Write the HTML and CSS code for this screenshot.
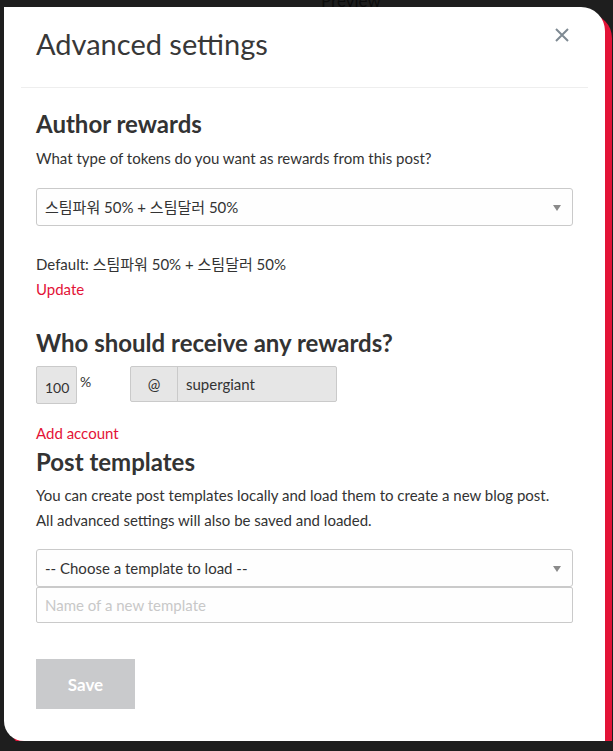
FILE: index.html
```html
<!DOCTYPE html>
<html lang="ko">
<head>
  <meta charset="UTF-8" />
  <meta name="viewport" content="width=device-width, initial-scale=1.0"/>
  <title>Advanced settings</title>
  <link rel="stylesheet" href="styles.css">
</head>
<body>
  <!-- Seite hinter dem Overlay -->
  <div class="page-behind">Preview</div>

  <div class="modal">
    <div class="modal-header">
      <h2 class="modal-title">Advanced settings</h2>
      <button class="close-button" aria-label="Close">
        <svg width="14" height="14" viewBox="0 0 14 14">
          <path d="M1 1 L13 13 M13 1 L1 13" stroke="#7f8a93" stroke-width="2" fill="none"/>
        </svg>
      </button>
    </div>

    <div class="modal-body">
      <!-- Author rewards -->
      <h3 class="section-title">Author rewards</h3>
      <p class="hint">What type of tokens do you want as rewards from this post?</p>
      <div class="select-wrap">
        <select class="select">
          <option>스팀파워 50% + 스팀달러 50%</option>
        </select>
        <span class="caret"></span>
      </div>
      <p class="default-note">
        Default: 스팀파워 50% + 스팀달러 50%<br>
        <a href="#" class="link">Update</a>
      </p>

      <!-- Beneficiaries -->
      <h3 class="section-title section-title--beneficiaries">Who should receive any rewards?</h3>
      <div class="beneficiary-row">
        <input class="percent-input" type="text" value="100" disabled>
        <span class="percent-sign">%</span>
        <div class="account-group">
          <span class="account-prefix">@</span>
          <input class="account-input" type="text" value="supergiant" disabled>
        </div>
      </div>
      <a href="#" class="link add-account">Add account</a>

      <!-- Templates -->
      <h3 class="section-title section-title--templates">Post templates</h3>
      <p class="hint hint--templates">
        You can create post templates locally and load them to create a new blog post.<br>
        All advanced settings will also be saved and loaded.
      </p>
      <div class="select-wrap select-wrap--templates">
        <select class="select">
          <option>-- Choose a template to load --</option>
        </select>
        <span class="caret"></span>
      </div>
      <input class="text-input" type="text" placeholder="Name of a new template">

      <button class="save-button" disabled>Save</button>
    </div>
  </div>
</body>
</html>
```

FILE: styles.css
```css
:root {
  --overlay: #1e1e1e;
  --accent: #e31337;
  --text: #333333;
  --border: #cacaca;
  --disabled-bg: #e6e6e6;
}

html, body {
  margin: 0;
  padding: 0;
}
body {
  background-color: var(--overlay);
  font-family: Lato, "Noto Sans CJK KR", sans-serif;
  color: var(--text);
  position: relative;
}

/* Text der darunterliegenden Seite, schaut oben heraus */
.page-behind {
  position: absolute;
  top: -9px;
  left: 321px;
  font-size: 17px;
  line-height: 20px;
  color: #0c0c0c;
}

/* Modal-Fenster mit rotem Versatz-Schatten */
.modal {
  margin: 7px 0 0 4px;
  width: 601px;
  height: 734px;
  box-sizing: border-box;
  padding: 0 17px;
  background-color: #ffffff;
  border-radius: 0 24px 0 20px;
  box-shadow: 7px 7px 0 var(--accent);
}

.modal-header {
  display: flex;
  justify-content: space-between;
  align-items: flex-start;
  height: 80px;
  padding: 0 15px;
  border-bottom: 1px solid #eeeeee;
}
.modal-title {
  margin: 19px 0 0;
  font-size: 29px;
  line-height: 36px;
  font-weight: 400;
  color: #383838;
}
.close-button {
  margin: 21px 4px 0 0;
  padding: 0;
  border: none;
  background: none;
  line-height: 0;
  cursor: pointer;
}

.modal-body {
  padding: 0 15px;
}

.section-title {
  margin: 22px 0 8px;
  font-size: 24px;
  line-height: 28px;
  font-weight: 700;
  color: #333333;
}
.section-title--beneficiaries {
  margin-top: 27px;
  margin-bottom: 9px;
}
.section-title--templates {
  margin-top: 2px;
  margin-bottom: 7px;
}

.hint {
  margin: 0 0 17px;
  font-size: 15px;
  line-height: 25px;
}
.hint--templates {
  margin-bottom: 16px;
}

/* Selects mit eigenem Pfeil */
.select-wrap {
  position: relative;
}
.select {
  display: block;
  width: 100%;
  height: 38px;
  box-sizing: border-box;
  padding: 0 8px;
  border: 1px solid var(--border);
  border-radius: 3px;
  background-color: #fefefe;
  font-family: inherit;
  font-size: 15px;
  color: var(--text);
  appearance: none;
  -webkit-appearance: none;
}
.caret {
  position: absolute;
  right: 12px;
  top: 17px;
  width: 0;
  height: 0;
  border-left: 4px solid transparent;
  border-right: 4px solid transparent;
  border-top: 6px solid #8a8a8a;
}

.default-note {
  margin: 26px 0 0;
  font-size: 15px;
  line-height: 25px;
}

.link {
  color: var(--accent);
  text-decoration: none;
  font-size: 15px;
}

/* Zeile: Prozent + Account */
.beneficiary-row {
  display: flex;
  align-items: flex-start;
}
.percent-input {
  width: 41px;
  height: 38px;
  box-sizing: border-box;
  padding: 4px 0 0 8px;
  border: 1px solid var(--border);
  border-radius: 2px;
  background-color: var(--disabled-bg);
  font-family: inherit;
  font-size: 14px;
  color: var(--text);
}
.percent-sign {
  margin: 7px 0 0 3px;
  width: 50px;
  font-size: 14px;
}
.account-group {
  display: flex;
  height: 36px;
  width: 207px;
  box-sizing: border-box;
  border: 1px solid var(--border);
  border-radius: 2px;
  background-color: var(--disabled-bg);
}
.account-prefix {
  width: 46px;
  border-right: 1px solid var(--border);
  display: flex;
  align-items: center;
  justify-content: center;
  font-size: 15px;
}
.account-input {
  flex: 1;
  min-width: 0;
  padding: 0 8px;
  border: none;
  background: transparent;
  font-family: inherit;
  font-size: 15px;
  color: var(--text);
}

.add-account {
  display: block;
  margin-top: 17px;
  line-height: 25px;
}

.text-input {
  display: block;
  width: 100%;
  height: 36px;
  box-sizing: border-box;
  margin-top: 0;
  padding: 0 8px;
  border: 1px solid var(--border);
  border-radius: 2px;
  background-color: #fefefe;
  font-family: inherit;
  font-size: 15px;
}
.text-input::placeholder {
  color: #c8c8c8;
}

.save-button {
  display: block;
  margin-top: 36px;
  width: 99px;
  height: 50px;
  border: none;
  background-color: #c9cacc;
  color: #ffffff;
  font-family: inherit;
  font-size: 17px;
  font-weight: 700;
}
```
